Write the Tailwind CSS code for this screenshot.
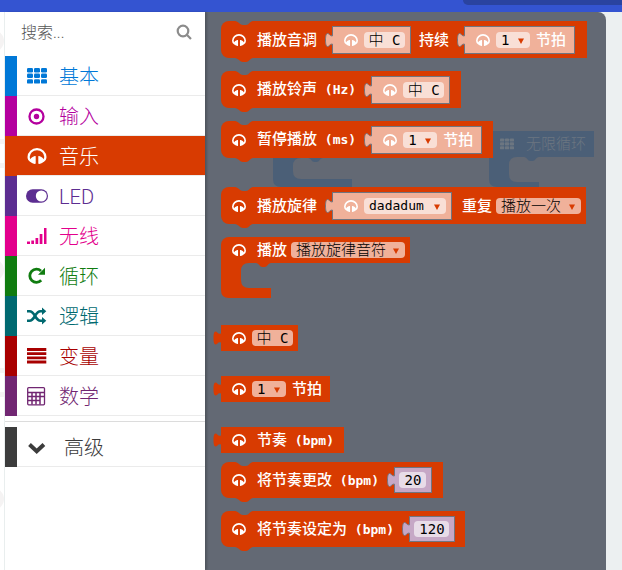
<!DOCTYPE html>
<html lang="zh-CN">
<head>
<meta charset="utf-8">
<meta name="viewport" content="width=device-width, initial-scale=1">
<title>积木编辑器</title>
<script src="https://cdn.jsdelivr.net/npm/@tailwindcss/browser@4"></script>
</head>
<body class="flex h-screen flex-col overflow-hidden bg-[#ecf0f1] font-['Roboto','Noto_Sans_CJK_SC',sans-serif]">

<svg class="hidden" aria-hidden="true">
  <symbol id="grid" viewBox="0 0 20 16">
    <g fill="currentColor"><rect width="6" height="4.4" rx="1.2"/><rect x="7" width="6" height="4.4" rx="1.2"/><rect x="14" width="6" height="4.4" rx="1.2"/><rect y="5.6" width="6" height="4.4" rx="1.2"/><rect x="7" y="5.6" width="6" height="4.4" rx="1.2"/><rect x="14" y="5.6" width="6" height="4.4" rx="1.2"/><rect y="11.2" width="6" height="4.4" rx="1.2"/><rect x="7" y="11.2" width="6" height="4.4" rx="1.2"/><rect x="14" y="11.2" width="6" height="4.4" rx="1.2"/></g>
  </symbol>
  <symbol id="phones" viewBox="0 0 19 16">
    <path d="M3.6 13.2C1.9 12.2 1.1 10.8 1.1 9.1a8.4 8 0 0 1 16.8 0c0 1.7-.8 3.1-2.5 4.1" fill="none" stroke="currentColor" stroke-width="2.2"/>
    <path d="M8.2 8.4v6.900c0 .5-.3.7-.8.7C4.8 15.600 2.600 14.200 2.600 12.400s2.200-3.900 4.800-4.400c.5 0 .8.1.8.4zM10.800 8.400v6.900c0 .5.3.7.8.7 2.600-.4 4.800-1.800 4.800-3.600s-2.200-3.900-4.800-4.400c-.5 0-.8.1-.8.4z" fill="currentColor"/>
  </symbol>
  <symbol id="notch" viewBox="0 0 18 4">
    <path d="M0 0h18c-3 0-4 4-7 4H8C5 4 3 0 0 0z" fill="currentColor"/>
  </symbol>
  <symbol id="tab" viewBox="0 0 8 14">
    <path d="M8 2.500C5 4 4.600 .5 2.500.5 1 .5.500 3.500.500 7s.5 6.500 2 6.500C4.600 13.500 5 10 8 11.500" fill="currentColor"/>
  </symbol>
  <symbol id="caret" viewBox="0 0 6 6"><path d="M0 .5h6L3 6z" fill="currentColor"/></symbol>
</svg>

<header class="relative h-3 shrink-0 bg-[#3454d1]">
  <div class="absolute top-0 right-0 left-[463px] h-[5px] rounded-bl-lg bg-[#2a43a0]"></div>
</header>

<main class="flex min-h-0 flex-1">
  <div class="w-[5px] shrink-0 overflow-hidden border-r border-[#e9eeee] bg-white" aria-hidden="true">
    <svg class="h-[558px] w-1" viewBox="0 0 4 558" fill="#f5f3f3"><circle cx="-7" cy="29" r="11"/><path d="M0 127h4v5H0zM0 151h4v5H0z"/><circle cx="-7" cy="258" r="11"/><path d="M0 356h4v5H0zM0 380h4v5H0z"/><circle cx="-7" cy="487" r="11"/></svg>
  </div>

  <aside class="relative z-10 w-[200px] shrink-0 bg-white shadow-[2px_0_2px_#0003]">
    <form class="flex h-11 items-center pr-3 pl-4" role="search">
      <input type="search" aria-label="搜索" placeholder="搜索..." class="mb-1 h-8 min-w-0 flex-1 appearance-none text-base font-light text-[#555] outline-none placeholder:text-[#555]">
      <button type="button" aria-label="搜索" class="mb-1 p-px text-[#8c8c8c]">
        <svg class="size-4" viewBox="0 0 16 16" fill="none" stroke="currentColor" stroke-width="2.200"><circle cx="7" cy="7" r="5.300"/><path d="M10.800 10.800 15 15"/></svg>
      </button>
    </form>
    <nav class="flex flex-col text-xl font-light [&_span>span]:pt-0.5">
      <button class="flex h-10 text-[#0078d7]"><span class="h-full w-3 bg-[#0078d7]"></span><span class="flex h-full flex-1 items-center gap-3 border-b border-[#ebebeb] pl-2.5"><svg class="h-4 w-5"><use href="#grid"/></svg><span>基本</span></span></button>
      <button class="flex h-10 text-[#b4009e]"><span class="h-full w-3 bg-[#b4009e]"></span><span class="flex h-full flex-1 items-center gap-3 border-b border-[#ebebeb] pl-2.5"><svg class="h-5 w-5" viewBox="0 0 20 20"><circle cx="9.500" cy="10.500" r="7" fill="none" stroke="currentColor" stroke-width="2.300"/><circle cx="9.500" cy="10.500" r="2.700" fill="currentColor"/></svg><span>输入</span></span></button>
      <button class="flex h-10 text-white" aria-current="true"><span class="h-full w-3 bg-[#d83b01]"></span><span class="flex h-full flex-1 items-center gap-3 border-b border-[#ebebeb] bg-[#d83b01] bg-clip-padding pl-2.5"><svg class="h-4 w-5"><use href="#phones"/></svg><span>音乐</span></span></button>
      <button class="flex h-10 text-[#5c2d91]"><span class="h-full w-3 bg-[#5c2d91]"></span><span class="flex h-full flex-1 items-center gap-3 border-b border-[#ebebeb] pl-2.5"><svg class="h-4 w-5 overflow-visible" viewBox="0 0 20 16"><rect x="-1" y="1.300" width="22" height="13.400" rx="6.700" fill="currentColor"/><circle cx="14.300" cy="8" r="5.500" fill="#fff"/></svg><span>LED</span></span></button>
      <button class="flex h-10 text-[#e3008c]"><span class="h-full w-3 bg-[#e3008c]"></span><span class="flex h-full flex-1 items-center gap-3 border-b border-[#ebebeb] pl-2.5"><svg class="h-4 w-5" viewBox="0 0 20 16" fill="currentColor"><path d="M0 13.500h3V16H0zM4.300 12.500h2.700V16H4.300zM8.500 10h2.700v6H8.500zM12.700 6h2.700v10h-2.700zM17 0h2.500v16H17z"/></svg><span>无线</span></span></button>
      <button class="flex h-10 text-[#107c10]"><span class="h-full w-3 bg-[#107c10]"></span><span class="flex h-full flex-1 items-center gap-3 border-b border-[#ebebeb] pl-2.5"><svg class="h-5 w-5" viewBox="0 0 20 20"><path d="M14.200 14.300A6.600 6.600 0 1 1 14 5" fill="none" stroke="currentColor" stroke-width="2.800"/><path d="M18 1.800v7h-7z" fill="currentColor"/></svg><span>循环</span></span></button>
      <button class="flex h-10 text-[#006970]"><span class="h-full w-3 bg-[#006970]"></span><span class="flex h-full flex-1 items-center gap-3 border-b border-[#ebebeb] pl-2.5"><svg class="h-4 w-5 overflow-visible" viewBox="0 0 20 16"><path d="M0 3.200h2.500c5.500 0 5.500 9.600 11 9.600H16M0 12.800h2.500c5.500 0 5.500-9.600 11-9.600H16" fill="none" stroke="currentColor" stroke-width="2.600"/><path d="M15-.6 19.300 3.200 15 7zM15 9l4.300 3.800L15 16.600z" fill="currentColor"/></svg><span>逻辑</span></span></button>
      <button class="flex h-10 text-[#a80000]"><span class="h-full w-3 bg-[#a80000]"></span><span class="flex h-full flex-1 items-center gap-3 border-b border-[#ebebeb] pl-2.5"><svg class="h-4 w-5" viewBox="0 0 20 16" fill="currentColor"><path d="M0 0h19.300v3H0zM0 4.300h19.300v2.700H0zM0 8.500h19.300v2.700H0zM0 12.500h19.300v3H0z"/></svg><span>变量</span></span></button>
      <button class="flex h-10 text-[#712672]"><span class="h-full w-3 bg-[#712672]"></span><span class="flex h-full flex-1 items-center gap-3 border-b border-[#ebebeb] pl-2.5"><svg class="h-5 w-5" viewBox="0 0 20 20" fill="none" stroke="currentColor"><rect x=".7" y="1.600" width="16.800" height="17.200" rx="1" stroke-width="1.300"/><path d="M1 6.500h16M1 10.500h16M1 14.500h12M5 6.500v12M9 6.500v12M13 6.500v12" stroke-width="1.500"/></svg><span>数学</span></span></button>
      <hr class="mt-[5px] mb-[5px] border-[#dcdcdc]">
      <button class="flex h-10 text-[#3c3c3c]"><span class="h-full w-3 bg-[#3c3c3c]"></span><span class="flex h-full flex-1 items-center gap-[17px] border-b border-[#ebebeb] pl-2.5"><svg class="h-5 w-5" viewBox="0 0 20 20"><path d="m2.500 7.500 7.200 6.700 7.200-6.700" fill="none" stroke="currentColor" stroke-width="4"/></svg><span>高级</span></span></button>
    </nav>
  </aside>

  <section aria-label="音乐" class="relative mr-4 flex flex-1 flex-col items-start overflow-hidden rounded-tr-lg bg-[#636974] pt-[9px] pl-4 font-['DejaVu_Sans_Mono','Noto_Sans_CJK_SC',monospace] text-[15px] leading-4 whitespace-nowrap text-white">

    <!-- dimmed workspace blocks behind the flyout -->
    <svg class="absolute top-[119px] left-[68px] h-14 w-20" viewBox="0 0 80 56" fill="#4b5f77"><path d="M0 0h80v27H50c-3 0-3.500 4-6.500 4h-2c-3 0-3.500-4-6.500-4h-7q-8 0-8 8v5q0 8 8 8h51v8H8q-8 0-8-8z"/></svg>
    <div class="absolute top-[119px] left-[284px] text-[#6c7681]">
      <svg class="h-14 w-[105px]" viewBox="0 0 105 56" fill="#4b5f77"><path d="M0 0h105v26H50c-3 0-3.500 4-6.500 4h-2c-3 0-3.500-4-6.500-4h-7q-8 0-8 8v9q0 8 8 8h22v5H8q-8 0-8-8z"/></svg>
      <div class="absolute top-0 left-[11px] flex h-[26px] items-center gap-3"><svg class="h-3 w-3.5"><use href="#grid"/></svg><span class="font-light">无限循环</span></div>
    </div>

    <div class="relative flex h-[37px] w-[366px] items-center rounded-l-lg bg-[#d83b01] pl-[11px]">
      <svg class="absolute top-0 left-3.5 h-1 w-[18px] text-[#636974]"><use href="#notch"/></svg>
      <svg class="absolute top-full left-3.5 h-1 w-[18px] text-[#d83b01]"><use href="#notch"/></svg>
      <svg class="mr-[11px] h-3 w-3.5"><use href="#phones"/></svg>
      <span class="font-medium">播放音调</span>
      <svg class="relative z-10 -mr-px ml-2 h-3.5 w-2 stroke-[#707580] text-[#f0b19a]"><use href="#tab"/></svg>
      <div class="flex h-7 w-[79px] items-center gap-1.5 border border-[#707580] bg-[#f0b19a] pl-[11px]"><svg class="h-3 w-3.5"><use href="#phones"/></svg><button class="h-4 w-[41px] rounded bg-[#f9dfd6] font-light text-black">中<span class="text-sm leading-4"> C</span></button></div>
      <span class="ml-2 font-medium">持续</span>
      <svg class="relative z-10 -mr-px ml-2 h-3.5 w-2 stroke-[#707580] text-[#f0b19a]"><use href="#tab"/></svg>
      <div class="flex h-7 w-[111px] items-center gap-1.5 border border-[#707580] bg-[#f0b19a] pl-[11px]"><svg class="h-3 w-3.5"><use href="#phones"/></svg><div class="relative text-black"><select aria-label="节拍数" class="block h-4 w-[34px] appearance-none rounded bg-[#f9dfd6] pl-[5px] text-sm leading-4"><option>1</option></select><svg class="pointer-events-none absolute top-1.5 right-1.5 size-1.5 text-[#d83b01]"><use href="#caret"/></svg></div><span class="font-medium">节拍</span></div>
    </div>

    <div class="relative mt-[13px] flex h-[37px] w-[240px] items-center rounded-l-lg bg-[#d83b01] pl-[11px]">
      <svg class="absolute top-0 left-3.5 h-1 w-[18px] text-[#636974]"><use href="#notch"/></svg>
      <svg class="absolute top-full left-3.5 h-1 w-[18px] text-[#d83b01]"><use href="#notch"/></svg>
      <svg class="mr-[11px] h-3 w-3.5"><use href="#phones"/></svg>
      <span class="font-medium">播放铃声<span class="text-[13px] font-bold"> (Hz)</span></span>
      <svg class="relative z-10 -mr-px ml-2 h-3.5 w-2 stroke-[#707580] text-[#f0b19a]"><use href="#tab"/></svg>
      <div class="flex h-7 w-[79px] items-center gap-1.5 border border-[#707580] bg-[#f0b19a] pl-[11px]"><svg class="h-3 w-3.5"><use href="#phones"/></svg><button class="h-4 w-[41px] rounded bg-[#f9dfd6] font-light text-black">中<span class="text-sm leading-4"> C</span></button></div>
    </div>

    <div class="relative mt-[13px] flex h-[37px] w-[272px] items-center rounded-l-lg bg-[#d83b01] pl-[11px]">
      <svg class="absolute top-0 left-3.5 h-1 w-[18px] text-[#636974]"><use href="#notch"/></svg>
      <svg class="absolute top-full left-3.5 h-1 w-[18px] text-[#d83b01]"><use href="#notch"/></svg>
      <svg class="mr-[11px] h-3 w-3.5"><use href="#phones"/></svg>
      <span class="font-medium">暂停播放<span class="text-[13px] font-bold"> (ms)</span></span>
      <svg class="relative z-10 -mr-px ml-2 h-3.5 w-2 stroke-[#707580] text-[#f0b19a]"><use href="#tab"/></svg>
      <div class="flex h-7 w-[111px] items-center gap-1.5 border border-[#707580] bg-[#f0b19a] pl-[11px]"><svg class="h-3 w-3.5"><use href="#phones"/></svg><div class="relative text-black"><select aria-label="节拍数" class="block h-4 w-[34px] appearance-none rounded bg-[#f9dfd6] pl-[5px] text-sm leading-4"><option>1</option></select><svg class="pointer-events-none absolute top-1.5 right-1.5 size-1.5 text-[#d83b01]"><use href="#caret"/></svg></div><span class="font-medium">节拍</span></div>
    </div>

    <div class="relative mt-[29px] flex h-[37px] w-[365px] items-center rounded-l-lg bg-[#d83b01] pl-[11px]">
      <svg class="absolute top-0 left-3.5 h-1 w-[18px] text-[#636974]"><use href="#notch"/></svg>
      <svg class="absolute top-full left-3.5 h-1 w-[18px] text-[#d83b01]"><use href="#notch"/></svg>
      <svg class="mr-[11px] h-3 w-3.5"><use href="#phones"/></svg>
      <span class="font-medium">播放旋律</span>
      <svg class="relative z-10 -mr-px ml-2 h-3.5 w-2 stroke-[#707580] text-[#f0b19a]"><use href="#tab"/></svg>
      <div class="flex h-7 w-[120px] items-center gap-1.5 border border-[#707580] bg-[#f0b19a] pl-[11px]"><svg class="h-3 w-3.5"><use href="#phones"/></svg><div class="relative text-black"><select aria-label="旋律" class="block h-4 w-[82px] appearance-none rounded bg-[#f9dfd6] pl-[5px] text-[13px] leading-4"><option>dadadum</option></select><svg class="pointer-events-none absolute top-1.5 right-1.5 size-1.5 text-[#d83b01]"><use href="#caret"/></svg></div></div>
      <span class="ml-2.5 font-medium">重复</span>
      <div class="relative ml-1 text-black"><select aria-label="重复方式" class="block h-4 w-[85px] appearance-none rounded bg-[#f0b19a] pl-[5px] leading-4 font-light"><option>播放一次</option></select><svg class="pointer-events-none absolute top-1.5 right-1.5 size-1.5 text-[#d83b01]"><use href="#caret"/></svg></div>
    </div>

    <div class="relative mt-[13px]">
      <div class="relative flex h-[26px] w-[189px] items-center rounded-tl-lg bg-[#d83b01] pl-[11px]">
        <svg class="mr-[11px] h-3 w-3.5"><use href="#phones"/></svg>
        <span class="font-medium">播放</span>
        <div class="relative ml-1 text-black"><select aria-label="音符" class="block h-4 w-[114px] appearance-none rounded bg-[#f0b19a] pl-[5px] leading-4 font-light"><option>播放旋律音符</option></select><svg class="pointer-events-none absolute top-1.5 right-1.5 size-1.5 text-[#d83b01]"><use href="#caret"/></svg></div>
      </div>
      <svg class="block h-[35px] w-[50px]" viewBox="0 0 50 35"><path d="M0 0h50c-3 0-3.500 4-6.500 4h-2C38.500 4 38 0 35 0h-7q-8 0-8 8v9q0 8 8 8h22v10H8q-8 0-8-8z" fill="#d83b01"/></svg>
    </div>

    <div class="relative mt-[27px] flex h-[26px] w-[77px] items-center gap-1.5 bg-[#d83b01] pl-[11px]">
      <svg class="absolute top-1.5 right-full h-3.5 w-2 text-[#d83b01]"><use href="#tab"/></svg>
      <svg class="h-3 w-3.5"><use href="#phones"/></svg>
      <button class="h-4 w-[41px] rounded bg-[#f0b19a] font-light text-black">中<span class="text-sm leading-4"> C</span></button>
    </div>

    <div class="relative mt-[25px] flex h-[26px] w-[109px] items-center gap-1.5 bg-[#d83b01] pl-[11px]">
      <svg class="absolute top-1.5 right-full h-3.5 w-2 text-[#d83b01]"><use href="#tab"/></svg>
      <svg class="h-3 w-3.5"><use href="#phones"/></svg>
      <div class="relative text-black"><select aria-label="节拍数" class="block h-4 w-[34px] appearance-none rounded bg-[#f0b19a] pl-[5px] text-sm leading-4"><option>1</option></select><svg class="pointer-events-none absolute top-1.5 right-1.5 size-1.5 text-[#d83b01]"><use href="#caret"/></svg></div>
      <span class="font-medium">节拍</span>
    </div>

    <div class="relative mt-[25px] flex h-[26px] w-[123px] items-center bg-[#d83b01] pl-[11px]">
      <svg class="absolute top-1.5 right-full h-3.5 w-2 text-[#d83b01]"><use href="#tab"/></svg>
      <svg class="mr-[11px] h-3 w-3.5"><use href="#phones"/></svg>
      <span class="font-medium">节奏<span class="text-[13px] font-bold"> (bpm)</span></span>
    </div>

    <div class="relative mt-[9px] flex h-9 w-[222px] items-center rounded-l-lg bg-[#d83b01] pl-[11px]">
      <svg class="absolute top-0 left-3.5 h-1 w-[18px] text-[#636974]"><use href="#notch"/></svg>
      <svg class="absolute top-full left-3.5 h-1 w-[18px] text-[#d83b01]"><use href="#notch"/></svg>
      <svg class="mr-[11px] h-3 w-3.5"><use href="#phones"/></svg>
      <span class="font-medium">将节奏更改<span class="text-[13px] font-bold"> (bpm)</span></span>
      <svg class="relative z-10 -mr-px ml-2 h-3.5 w-2 stroke-[#707580] text-[#c6a8c6]"><use href="#tab"/></svg>
      <div class="flex h-[26px] w-[38px] items-center justify-center border border-[#707580] bg-[#c6a8c6]"><input type="text" inputmode="numeric" aria-label="节奏变化" value="20" class="h-4 w-[27px] rounded bg-[#e8dce8] text-center text-sm leading-4 text-black"></div>
    </div>

    <div class="relative mt-[13px] flex h-9 w-[244px] items-center rounded-l-lg bg-[#d83b01] pl-[11px]">
      <svg class="absolute top-0 left-3.5 h-1 w-[18px] text-[#636974]"><use href="#notch"/></svg>
      <svg class="absolute top-full left-3.5 h-1 w-[18px] text-[#d83b01]"><use href="#notch"/></svg>
      <svg class="mr-[11px] h-3 w-3.5"><use href="#phones"/></svg>
      <span class="font-medium">将节奏设定为<span class="text-[13px] font-bold"> (bpm)</span></span>
      <svg class="relative z-10 -mr-px ml-2 h-3.5 w-2 stroke-[#707580] text-[#c6a8c6]"><use href="#tab"/></svg>
      <div class="flex h-[26px] w-[46px] items-center justify-center border border-[#707580] bg-[#c6a8c6]"><input type="text" inputmode="numeric" aria-label="节奏" value="120" class="h-4 w-[35px] rounded bg-[#e8dce8] text-center text-sm leading-4 text-black"></div>
    </div>
  </section>
</main>
</body>
</html>
